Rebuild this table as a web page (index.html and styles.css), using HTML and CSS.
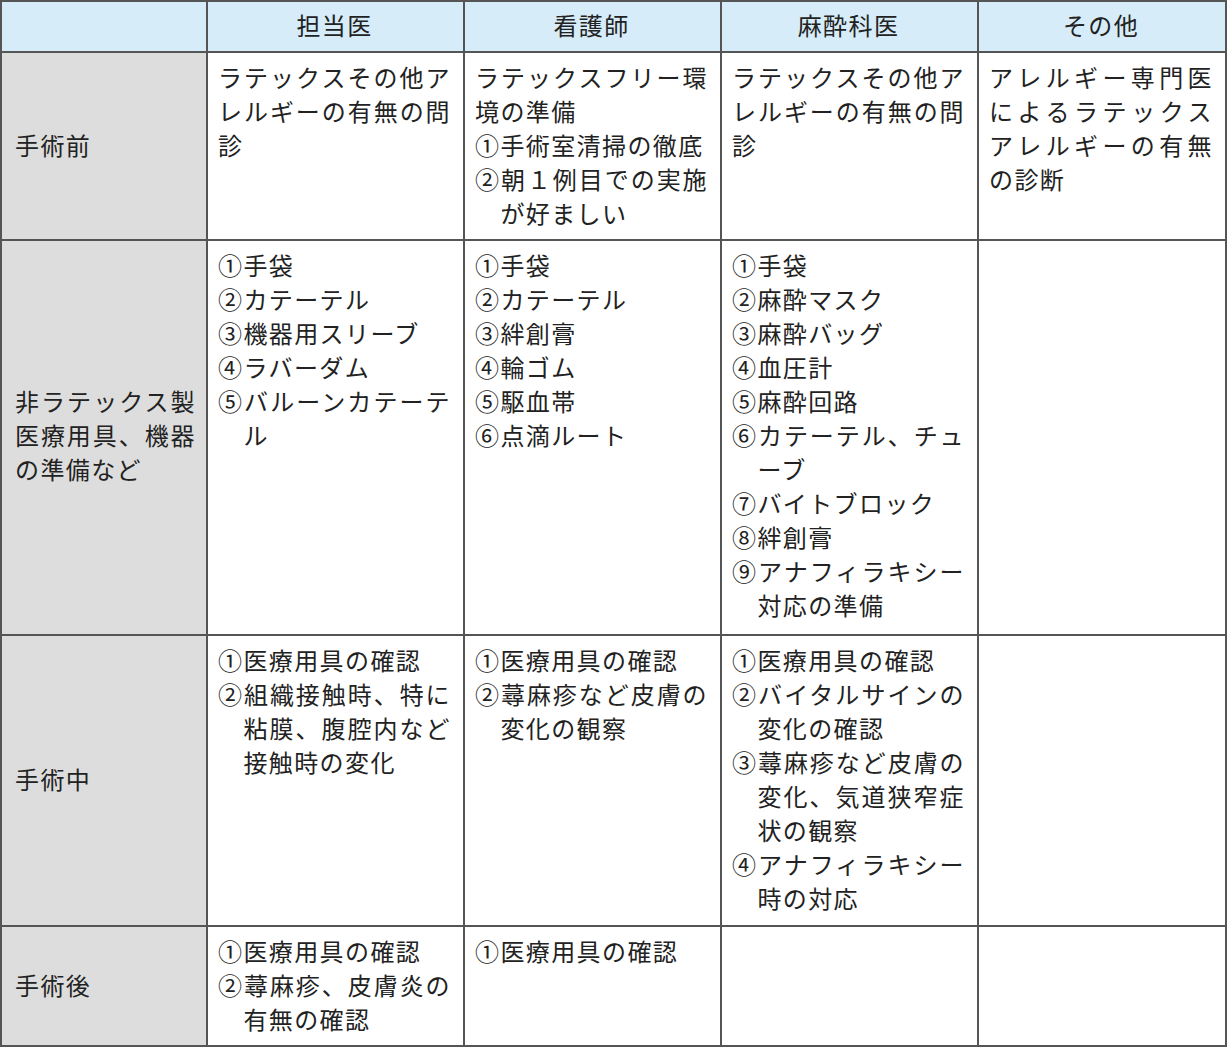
FILE: index.html
```html
<!DOCTYPE html>
<html lang="ja">
<head>
<meta charset="utf-8">
<title>ラテックスアレルギー対策</title>
<link rel="stylesheet" href="styles.css">
</head>
<body>
<table class="plan">
  <colgroup>
    <col class="c-stage">
    <col class="c-role">
    <col class="c-role">
    <col class="c-role">
    <col class="c-last">
  </colgroup>
  <thead>
    <tr>
      <th class="corner"></th>
      <th>担当医</th>
      <th>看護師</th>
      <th>麻酔科医</th>
      <th>その他</th>
    </tr>
  </thead>
  <tbody>
    <tr>
      <th class="stage">手術前</th>
      <td><p class="txt">ラテックスその他アレルギーの有無の問診</p></td>
      <td>
        <p class="txt">ラテックスフリー環境の準備</p>
        <p class="item">①手術室清掃の徹底</p>
        <p class="item">②朝１例目での実施が好ましい</p>
      </td>
      <td><p class="txt">ラテックスその他アレルギーの有無の問診</p></td>
      <td><p class="txt">アレルギー専門医によるラテックスアレルギーの有無の診断</p></td>
    </tr>
    <tr class="row-tall">
      <th class="stage">非ラテックス製医療用具、機器の準備など</th>
      <td>
        <p class="item">①手袋</p>
        <p class="item">②カテーテル</p>
        <p class="item">③機器用スリーブ</p>
        <p class="item">④ラバーダム</p>
        <p class="item">⑤バルーンカテーテル</p>
      </td>
      <td>
        <p class="item">①手袋</p>
        <p class="item">②カテーテル</p>
        <p class="item">③絆創膏</p>
        <p class="item">④輪ゴム</p>
        <p class="item">⑤駆血帯</p>
        <p class="item">⑥点滴ルート</p>
      </td>
      <td>
        <p class="item">①手袋</p>
        <p class="item">②麻酔マスク</p>
        <p class="item">③麻酔バッグ</p>
        <p class="item">④血圧計</p>
        <p class="item">⑤麻酔回路</p>
        <p class="item">⑥カテーテル、チューブ</p>
        <p class="item">⑦バイトブロック</p>
        <p class="item">⑧絆創膏</p>
        <p class="item">⑨アナフィラキシー対応の準備</p>
      </td>
      <td></td>
    </tr>
    <tr class="row-mid">
      <th class="stage">手術中</th>
      <td>
        <p class="item">①医療用具の確認</p>
        <p class="item">②組織接触時、特に粘膜、腹腔内など接触時の変化</p>
      </td>
      <td>
        <p class="item">①医療用具の確認</p>
        <p class="item">②蕁麻疹など皮膚の変化の観察</p>
      </td>
      <td>
        <p class="item">①医療用具の確認</p>
        <p class="item">②バイタルサインの変化の確認</p>
        <p class="item">③蕁麻疹など皮膚の変化、気道狭窄症状の観察</p>
        <p class="item">④アナフィラキシー時の対応</p>
      </td>
      <td></td>
    </tr>
    <tr>
      <th class="stage">手術後</th>
      <td>
        <p class="item">①医療用具の確認</p>
        <p class="item">②蕁麻疹、皮膚炎の有無の確認</p>
      </td>
      <td>
        <p class="item">①医療用具の確認</p>
      </td>
      <td></td>
      <td></td>
    </tr>
  </tbody>
</table>
</body>
</html>
```

FILE: styles.css
```css
html, body {
  margin: 0;
  padding: 0;
  background: #ffffff;
}

.plan {
  border-collapse: separate;
  border-spacing: 0;
  table-layout: fixed;
  width: 1227px;
  border-top: 2px solid #555555;
  border-left: 2px solid #555555;
  font-family: "Noto Sans CJK JP", "Noto Sans", sans-serif;
  font-size: 24px;
  line-height: 34px;
  letter-spacing: 1.4px;
  color: #222222;
}

.c-stage { width: 206px; }
.c-role  { width: 257px; }
.c-last  { width: 248px; }

.plan th,
.plan td {
  border-right: 2px solid #555555;
  border-bottom: 2px solid #555555;
  padding: 7px 12px 9px 10px;
  vertical-align: top;
  text-align: justify;
  text-justify: inter-character;
  line-break: loose;
  font-weight: 400;
}

.plan thead th {
  background: #d6edf9;
  text-align: center;
  vertical-align: middle;
  padding: 6px 12px 9px 10px;
}

.plan .stage {
  background: #dcdddc;
  vertical-align: middle;
  text-align: justify;
  padding: 7px 10px 9px 13px;
}

.row-tall td,
.row-tall th.stage {
  padding-bottom: 12px;
}

.row-mid td,
.row-mid th.stage {
  padding-bottom: 10px;
}

.txt,
.item {
  margin: 0;
}

.item {
  padding-left: 25.4px;
  text-indent: -25.4px;
}
```
